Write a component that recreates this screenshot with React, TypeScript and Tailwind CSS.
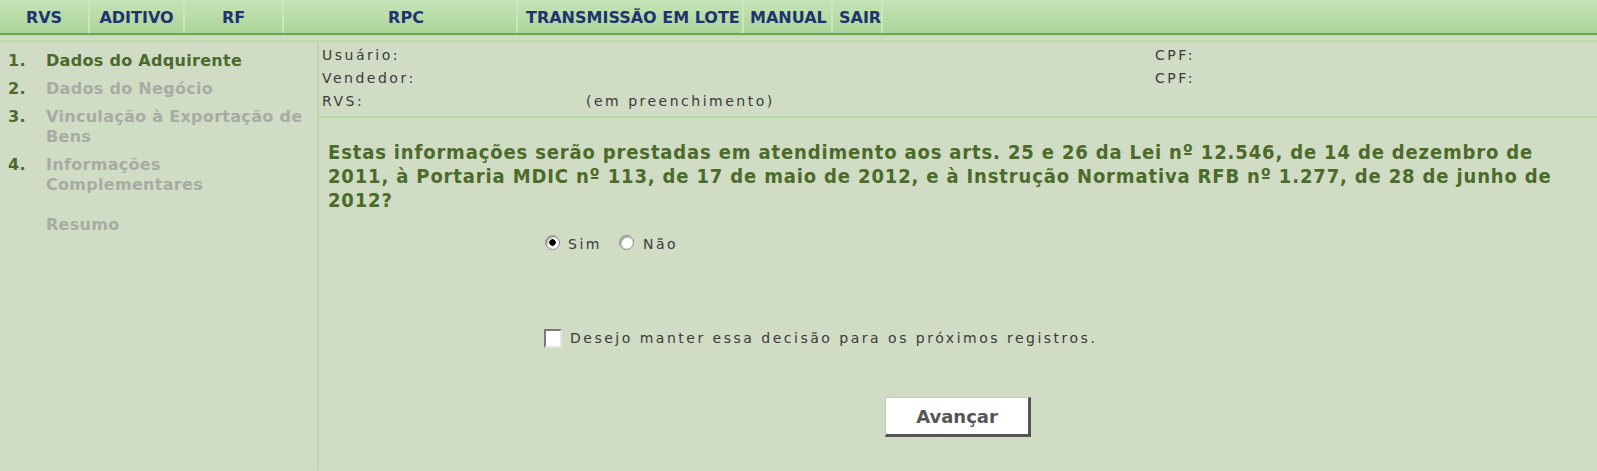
import React, { useState } from "react";

const menu = [
  { label: "RVS", cls: "w-[90px] justify-center" },
  { label: "ADITIVO", cls: "w-[95px] justify-center" },
  { label: "RF", cls: "w-[99px] justify-center" },
  { label: "RPC", cls: "w-[234px] justify-center pl-3" },
  { label: "TRANSMISSÃO EM LOTE", cls: "w-[226px] pl-2" },
  { label: "MANUAL", cls: "w-[89px] pl-1.5" },
  { label: "SAIR", cls: "pl-1.5 border-r-0" },
];

const steps = [
  { n: "1.", label: "Dados do Adquirente", active: true },
  { n: "2.", label: "Dados do Negócio" },
  { n: "3.", label: "Vinculação à Exportação de Bens" },
  { n: "4.", label: "Informações Complementares" },
];

export default function App() {
  const [answer, setAnswer] = useState("sim");
  const [keep, setKeep] = useState(false);

  return (
    <div className="min-h-screen bg-[#d1dcc5] font-['DejaVu_Sans',sans-serif]">
      {/* top menu */}
      <div className="h-[35px] bg-gradient-to-b from-[#c5e4b7] to-[#acd598] border-b-2 border-[#6aa84f] flex">
        {menu.map((m) => (
          <a
            key={m.label}
            href="#"
            className={`flex items-center h-full pt-[2px] border-r-2 border-[#c9e6bc] text-[16px] font-bold text-[#1d3470] ${m.cls}`}
          >
            {m.label}
          </a>
        ))}
      </div>
      <div className="h-[7px] border-t-2 border-t-[#c2e0b3] border-b-2 border-b-[#bcdaad]" />

      <div className="flex">
        {/* steps */}
        <div className="w-[317px] shrink-0 pt-[9px] pl-2 pr-1 font-bold text-[16px] leading-[20px] tracking-[0.3px]">
          {steps.map((s) => (
            <div key={s.n} className="flex mb-2">
              <span className="w-[38px] shrink-0 text-[#4a6a2c]">{s.n}</span>
              <span className={s.active ? "text-[#4a6a2c]" : "text-[#a7aca3]"}>{s.label}</span>
            </div>
          ))}
          <div className="mt-5 pl-[38px] text-[#a7aca3]">Resumo</div>
        </div>

        {/* main */}
        <div className="flex-1 min-h-[428px] border-l-2 border-[#bcd9ad]">
          <div className="pl-[3px] pt-[2px] pb-[3px] border-b-2 border-[#b7d7a7] text-[14px] leading-[23px] tracking-[2.5px] text-[#3a3a3a]">
            <div className="grid grid-cols-[264px_569px_1fr]">
              <span>Usuário:</span>
              <span></span>
              <span>CPF:</span>
            </div>
            <div className="grid grid-cols-[264px_569px_1fr]">
              <span>Vendedor:</span>
              <span></span>
              <span>CPF:</span>
            </div>
            <div className="grid grid-cols-[264px_569px_1fr]">
              <span>RVS:</span>
              <span>(em preenchimento)</span>
              <span></span>
            </div>
          </div>

          <p className="mt-[22px] pl-[9px] font-['DejaVu_Sans_Condensed','DejaVu_Sans',sans-serif] font-bold text-[20px] leading-[24px] tracking-[0.85px] text-[#4b6b2b]">
            Estas informações serão prestadas em atendimento aos arts. 25 e 26 da Lei nº 12.546, de 14 de dezembro de
            <br />
            2011, à Portaria MDIC nº 113, de 17 de maio de 2012, e à Instrução Normativa RFB nº 1.277, de 28 de junho de
            <br />
            2012?
          </p>

          <div className="mt-[18px] pl-[226px] flex items-center text-[14px] leading-[20px] tracking-[2.5px] text-[#3a3a3a]">
            <label className="flex items-center">
              <input
                type="radio"
                name="resp"
                checked={answer === "sim"}
                onChange={() => setAnswer("sim")}
                className="appearance-none w-[15px] h-[15px] rounded-full bg-white border border-[#8c8c8c] shadow-[inset_1px_1px_2px_#777] checked:bg-[radial-gradient(circle,#000_0_3px,#fff_3.5px)]"
              />
              <span className="ml-[8px] mt-[4px]">Sim</span>
            </label>
            <label className="flex items-center ml-[17px]">
              <input
                type="radio"
                name="resp"
                checked={answer === "nao"}
                onChange={() => setAnswer("nao")}
                className="appearance-none w-[15px] h-[15px] rounded-full bg-white border border-[#8c8c8c] shadow-[inset_1px_1px_2px_#777] checked:bg-[radial-gradient(circle,#000_0_3px,#fff_3.5px)]"
              />
              <span className="ml-[9px] mt-[4px]">Não</span>
            </label>
          </div>

          <label className="mt-[74px] pl-[225px] flex items-center text-[14px] leading-[20px] tracking-[2.5px] text-[#3a3a3a]">
            <input
              type="checkbox"
              checked={keep}
              onChange={(e) => setKeep(e.target.checked)}
              className="appearance-none w-[18px] h-[19px] bg-white border-2 border-t-[#7a7a7a] border-l-[#7a7a7a] border-r-[#e4e4e4] border-b-[#e4e4e4] checked:bg-[radial-gradient(circle,#000_0_4px,#fff_4.5px)]"
            />
            <span className="ml-[8px]">Desejo manter essa decisão para os próximos registros.</span>
          </label>

          <div className="mt-[49px] flex justify-center">
            <button
              type="button"
              className="w-[146px] h-[40px] bg-white border border-[#c4c4c4] border-r-[3px] border-b-[3px] border-r-[#555] border-b-[#555] text-[18px] font-bold text-[#555]"
            >
              Avançar
            </button>
          </div>
        </div>
      </div>
    </div>
  );
}
